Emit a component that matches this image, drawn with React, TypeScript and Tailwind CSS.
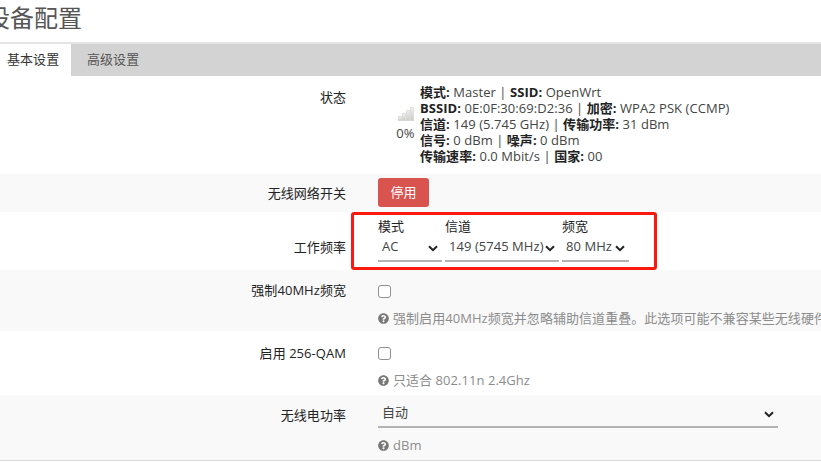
import { FaQuestionCircle } from "react-icons/fa";

const font = { fontFamily: '"Open Sans", "Noto Sans CJK SC", sans-serif' };

function Chevron() {
  return (
    <svg width="10" height="7" viewBox="0 0 10 7" className="mt-[2px] shrink-0">
      <path d="M1 1.2 L5 5.2 L9 1.2" fill="none" stroke="#222" strokeWidth="2" />
    </svg>
  );
}

function SelectBox({ label, value, width }: { label?: string; value: string; width: string }) {
  return (
    <div className={`flex flex-col ${width}`}>
      {label && <div className="h-[18px] leading-[16px] text-[#222]">{label}</div>}
      <div className="flex h-[26px] items-center justify-between border-b-2 border-[#b3b3b3] pl-1 pr-[4px] pb-[2px] text-[#444]">
        <span className="whitespace-nowrap">{value}</span>
        <Chevron />
      </div>
    </div>
  );
}

function Hint({ text }: { text: string }) {
  return (
    <div className="flex items-center gap-[4px] whitespace-nowrap text-[#8c8c8c]">
      <FaQuestionCircle className="shrink-0 text-[11px] text-[#777]" />
      <span>{text}</span>
    </div>
  );
}

function Row({
  label,
  children,
  className,
  labelClass,
}: {
  label: string;
  children: React.ReactNode;
  className: string;
  labelClass: string;
}) {
  return (
    <div className={`relative flex ${className}`}>
      <div className={`w-[346px] shrink-0 text-right leading-[18px] text-[#222] ${labelClass}`}>{label}</div>
      <div className="ml-[32px] min-w-0 flex-1">{children}</div>
    </div>
  );
}

function Checkbox() {
  return (
    <input
      type="checkbox"
      className="block h-[13px] w-[13px] appearance-none rounded-[3px] border border-[#8f8f8f] bg-white"
    />
  );
}

function Signal() {
  return (
    <svg width="16" height="14" viewBox="0 0 16 14">
      <defs>
        <linearGradient id="bar" x1="0" y1="0" x2="0" y2="1">
          <stop offset="0" stopColor="#f4f4f2" />
          <stop offset="1" stopColor="#c6c8c3" />
        </linearGradient>
      </defs>
      <g fill="url(#bar)" stroke="#d4d5d1" strokeWidth="0.6">
        <rect x="0.3" y="9.3" width="3.2" height="4.4" />
        <rect x="4.3" y="6.3" width="3.2" height="7.4" />
        <rect x="8.3" y="3.3" width="3.2" height="10.4" />
        <rect x="12.3" y="0.3" width="3.2" height="13.4" />
      </g>
    </svg>
  );
}

export default function App() {
  return (
    <div className="h-[474px] w-[821px] overflow-hidden bg-white text-[13px] tracking-[0.05px]" style={font}>
      <h2 className="-ml-[14px] h-[42px] pt-[2px] text-[24px] leading-[32px] font-normal tracking-normal text-[#555]">
        设备配置
      </h2>

      <div className="flex h-[34px] border-t-2 border-[#e4e4e4] bg-[#d3d3d3]">
        <div className="flex w-[71px] items-center bg-white pl-[7px] text-[#333]">基本设置</div>
        <div className="flex items-center pl-[16px] text-[#555]">高级设置</div>
      </div>

      <Row label="状态" className="h-[98px] bg-white" labelClass="pt-[12px]">
        <div className="flex items-center gap-[6px] pt-[8px] leading-[16px] text-[#444]">
          <div className="ml-[19px] flex w-[17px] flex-col items-center gap-[4px]">
            <Signal />
            <span className="whitespace-nowrap">0%</span>
          </div>
          <div className="whitespace-nowrap">
            <div><b className="text-[#222]">模式:</b> Master | <b className="text-[#222]">SSID:</b> OpenWrt</div>
            <div><b className="text-[#222]">BSSID:</b> 0E:0F:30:69:D2:36 | <b className="text-[#222]">加密:</b> WPA2 PSK (CCMP)</div>
            <div><b className="text-[#222]">信道:</b> 149 (5.745 GHz) | <b className="text-[#222]">传输功率:</b> 31 dBm</div>
            <div><b className="text-[#222]">信号:</b> 0 dBm | <b className="text-[#222]">噪声:</b> 0 dBm</div>
            <div><b className="text-[#222]">传输速率:</b> 0.0 Mbit/s | <b className="text-[#222]">国家:</b> 00</div>
          </div>
        </div>
      </Row>

      <Row label="无线网络开关" className="h-[38px] bg-[#f9f9f9]" labelClass="pt-[10px]">
        <div className="pt-[4px]">
          <button className="h-[29px] w-[51px] rounded-[3px] bg-[#d9534f] text-white">停用</button>
        </div>
      </Row>

      <Row label="工作频率" className="h-[58px] bg-white" labelClass="pt-[26px]">
        <div className="flex gap-[3px] pt-[6px]">
          <SelectBox label="模式" value="AC" width="w-[64px]" />
          <SelectBox label="信道" value="149 (5745 MHz)" width="w-[114px]" />
          <SelectBox label="频宽" value="80 MHz" width="w-[67px]" />
        </div>
        <div className="absolute left-[351px] top-0 h-[58px] w-[306px] rounded-[3px] border-[3px] border-[#fb1a0d]" />
      </Row>

      <Row label="强制40MHz频宽" className="h-[61px] bg-[#f9f9f9]" labelClass="pt-[11px]">
        <div className="pt-[15px]">
          <Checkbox />
          <div className="mt-[11px]">
            <Hint text="强制启用40MHz频宽并忽略辅助信道重叠。此选项可能不兼容某些无线硬件导致" />
          </div>
        </div>
      </Row>

      <Row label="启用 256-QAM" className="h-[64px] bg-white" labelClass="pt-[13px]">
        <div className="pt-[16px]">
          <Checkbox />
          <div className="mt-[11px]">
            <Hint text="只适合 802.11n 2.4Ghz" />
          </div>
        </div>
      </Row>

      <Row label="无线电功率" className="h-[66px] border-b border-[#d8d8d8] bg-[#f9f9f9]" labelClass="pt-[11px]">
        <div className="w-[400px] pt-[7px]">
          <SelectBox value="自动" width="w-[400px]" />
          <div className="mt-[8px]">
            <Hint text="dBm" />
          </div>
        </div>
      </Row>
    </div>
  );
}
